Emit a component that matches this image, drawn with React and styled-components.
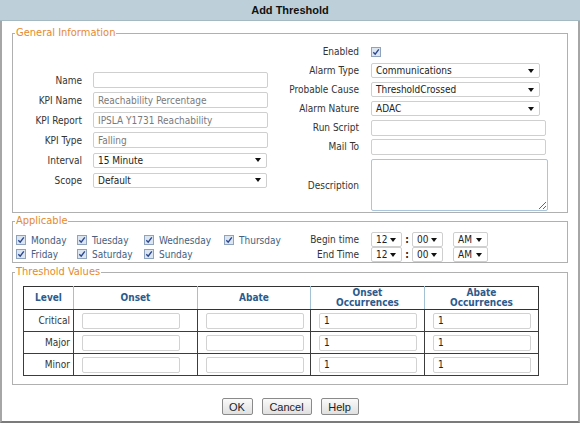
import React from 'react';
import styled, { createGlobalStyle } from 'styled-components';

const GlobalStyle = createGlobalStyle`
  html, body {
    margin: 0;
    padding: 0;
    background: #fff;
  }
  body {
    font-family: "DejaVu Sans Condensed", "Liberation Sans", sans-serif;
    font-size: 10px;
    color: #333;
  }
  * {
    box-sizing: border-box;
  }
`

const days = [
  ['Monday', 'Tuesday', 'Wednesday', 'Thursday'],
  ['Friday', 'Saturday', 'Sunday'],
]

const levels = ['Critical', 'Major', 'Minor']

const Check = () => (
  <CheckBox>
    <svg width="8" height="8" viewBox="0 0 8 8">
      <path d="M1.3 4.2 L3.2 6.2 L6.8 1.4" fill="none" stroke="#2a468f" strokeWidth="1.4" />
    </svg>
  </CheckBox>
)

const Select = ({ value, width }) => (
  <SelectBox $width={width}>
    <span>{value}</span>
    <svg width="6" height="4" viewBox="0 0 6 4">
      <polygon points="0,0 6,0 3,4" fill="#111" />
    </svg>
  </SelectBox>
)

const TimePicker = () => (
  <TimeControls>
    <Select value="12" width={31} />
    <Colon>:</Colon>
    <Select value="00" width={31} />
    <Ampm>
      <Select value="AM" width={35} />
    </Ampm>
  </TimeControls>
)

const App = () => {
  return (
    <Dialog>
      <GlobalStyle />
      <TitleBar>Add Threshold</TitleBar>
      <Body>
        <Group>
          <Legend>General Information</Legend>
          <GeneralGrid>
            <LeftCol>
              <FieldRow $label={69} $gap={11} $h={20}>
                <Label>Name</Label>
                <Input defaultValue="" />
              </FieldRow>
              <FieldRow $label={69} $gap={11} $h={20}>
                <Label>KPI Name</Label>
                <Input readOnly $muted defaultValue="Reachability Percentage" />
              </FieldRow>
              <FieldRow $label={69} $gap={11} $h={20}>
                <Label>KPI Report</Label>
                <Input readOnly $muted defaultValue="IPSLA Y1731 Reachability" />
              </FieldRow>
              <FieldRow $label={69} $gap={11} $h={20}>
                <Label>KPI Type</Label>
                <Input readOnly $muted defaultValue="Falling" />
              </FieldRow>
              <FieldRow $label={69} $gap={11} $h={20}>
                <Label>Interval</Label>
                <Select value="15 Minute" width={174} />
              </FieldRow>
              <FieldRow $label={69} $gap={11} $h={20}>
                <Label>Scope</Label>
                <Select value="Default" width={174} />
              </FieldRow>
            </LeftCol>
            <RightCol>
              <FieldRow $label={90} $gap={12} $h={19}>
                <Label>Enabled</Label>
                <div><Check /></div>
              </FieldRow>
              <FieldRow $label={90} $gap={12} $h={19}>
                <Label>Alarm Type</Label>
                <Select value="Communications" width={169} />
              </FieldRow>
              <FieldRow $label={90} $gap={12} $h={19}>
                <Label>Probable Cause</Label>
                <Select value="ThresholdCrossed" width={169} />
              </FieldRow>
              <FieldRow $label={90} $gap={12} $h={19}>
                <Label>Alarm Nature</Label>
                <Select value="ADAC" width={169} />
              </FieldRow>
              <FieldRow $label={90} $gap={12} $h={19}>
                <Label>Run Script</Label>
                <Input defaultValue="" />
              </FieldRow>
              <FieldRow $label={90} $gap={12} $h={19}>
                <Label>Mail To</Label>
                <Input defaultValue="" />
              </FieldRow>
              <FieldRow $label={90} $gap={12} $h={52} $top={3}>
                <Label>Description</Label>
                <TextArea defaultValue="" />
              </FieldRow>
            </RightCol>
          </GeneralGrid>
        </Group>

        <Group $top={2}>
          <Legend>Applicable</Legend>
          <ApplicableGrid>
            <DayGrid>
              {days.map((row) =>
                row.map((d) => (
                  <DayItem key={d}>
                    <Check />
                    <span>{d}</span>
                  </DayItem>
                ))
              )}
            </DayGrid>
            <div>
              <FieldRow $label={90} $gap={12} $h={15}>
                <Label>Begin time</Label>
                <TimePicker />
              </FieldRow>
              <FieldRow $label={90} $gap={12} $h={15}>
                <Label>End Time</Label>
                <TimePicker />
              </FieldRow>
            </div>
          </ApplicableGrid>
        </Group>

        <Group $top={3}>
          <Legend>Threshold Values</Legend>
          <Table>
            <colgroup>
              <col style={{ width: 50 }} />
              <col style={{ width: 124 }} />
              <col style={{ width: 113 }} />
              <col style={{ width: 114 }} />
              <col style={{ width: 114 }} />
            </colgroup>
            <thead>
              <tr>
                <Th>Level</Th>
                <Th>Onset</Th>
                <Th>Abate</Th>
                <Th>Onset<br />Occurrences</Th>
                <Th>Abate<br />Occurrences</Th>
              </tr>
            </thead>
            <tbody>
              {levels.map((l) => (
                <tr key={l}>
                  <LevelCell>{l}</LevelCell>
                  <Td><CellInput defaultValue="" /></Td>
                  <Td><CellInput defaultValue="" /></Td>
                  <Td><CellInput defaultValue="1" /></Td>
                  <Td><CellInput defaultValue="1" /></Td>
                </tr>
              ))}
            </tbody>
          </Table>
        </Group>

        <ButtonRow>
          <Button $w={31}>OK</Button>
          <Button $w={50}>Cancel</Button>
          <Button $w={38}>Help</Button>
        </ButtonRow>
      </Body>
    </Dialog>
  )
}

const Dialog = styled.div`
  width: 580px;
  height: 426px;
  background: #fff;
  display: flex;
  flex-direction: column;
`

const TitleBar = styled.div`
  height: 21px;
  background: #bdd0d9;
  border-bottom: 1px solid #a5b9c3;
  display: flex;
  align-items: center;
  justify-content: center;
  font: bold 11px "Liberation Sans", sans-serif;
  color: #111;
`

const Body = styled.div`
  height: 402px;
  border: 2px solid #a6a6a6;
  border-top: none;
  border-bottom-color: #7b7b7b;
  padding: 6px 10px 0;
  display: flex;
  flex-direction: column;
`

const Group = styled.fieldset`
  margin: ${(p) => p.$top || 0}px 0 0;
  padding: 0;
  border: 1px solid #b0b0b0;
  min-width: 0;
`

const Legend = styled.legend`
  padding: 0 1px;
  margin-left: 2px;
  color: #e58a2e;
  font-size: 11px;
  line-height: 12px;
`

const GeneralGrid = styled.div`
  display: grid;
  grid-template-columns: 256px 1fr;
  padding: 3px 0 1px;
`

const LeftCol = styled.div`
  padding-top: 28px;
  display: flex;
  flex-direction: column;
`

const RightCol = styled.div`
  display: flex;
  flex-direction: column;
`

const FieldRow = styled.div`
  display: grid;
  grid-template-columns: ${(p) => p.$label}px auto;
  column-gap: ${(p) => p.$gap}px;
  align-items: center;
  height: ${(p) => p.$h}px;
  margin-top: ${(p) => p.$top || 0}px;
`

const Label = styled.div`
  text-align: right;
  white-space: nowrap;
  color: #333;
`

const Input = styled.input`
  width: 175px;
  height: 16px;
  border: 1px solid #cfcfcf;
  border-radius: 2px;
  padding: 0 4px;
  font: inherit;
  color: ${(p) => (p.$muted ? '#7a7a7a' : '#222')};
  background: #fff;
  outline: none;
`

const TextArea = styled.textarea`
  width: 177px;
  height: 52px;
  border: 1px solid #a9c6dc;
  border-radius: 2px;
  font: inherit;
  resize: both;
  outline: none;
  padding: 2px 4px;
`

const SelectBox = styled.div`
  width: ${(p) => p.$width}px;
  height: 15px;
  border: 1px solid #cfcfcf;
  border-radius: 2px;
  background: #fff;
  display: flex;
  align-items: center;
  justify-content: space-between;
  padding: 0 5px 0 4px;
  color: #222;
  white-space: nowrap;
`

const CheckBox = styled.span`
  width: 10px;
  height: 10px;
  border: 1px solid #8fa3bc;
  background: #dce6f1;
  display: inline-flex;
  align-items: center;
  justify-content: center;
  vertical-align: middle;
`

const ApplicableGrid = styled.div`
  display: grid;
  grid-template-columns: 256px 1fr;
  padding: 5px 0 0;
`

const DayGrid = styled.div`
  display: grid;
  grid-template-columns: 61px 67px 80px auto;
  grid-auto-rows: 14px;
  padding: 1px 0 0 3px;
`

const DayItem = styled.div`
  display: flex;
  align-items: center;
  gap: 5px;
  color: #46607e;
  white-space: nowrap;
`

const TimeControls = styled.div`
  display: flex;
  align-items: center;
`

const Colon = styled.span`
  width: 10px;
  text-align: center;
  font-weight: bold;
  color: #222;
`

const Ampm = styled.div`
  margin-left: 10px;
`

const Table = styled.table`
  margin: 8px 0 8px 10px;
  width: 515px;
  border-collapse: collapse;
  table-layout: fixed;
`

const Th = styled.th`
  height: 23px;
  padding: 0;
  border: 1px solid #333;
  border-left-color: #a4c0d4;
  border-right-color: #a4c0d4;
  color: #2b5b8c;
  font-weight: bold;
  font-size: 10px;
  line-height: 10px;
  text-align: center;
  &:first-child {
    border-left-color: #333;
  }
  &:last-child {
    border-right-color: #333;
  }
`

const Td = styled.td`
  height: 22px;
  padding: 0 0 0 8px;
  border: 1px solid #3c3c3c;
`

const LevelCell = styled.td`
  height: 22px;
  padding: 0 3px 0 0;
  border: 1px solid #3c3c3c;
  text-align: right;
  color: #333;
`

const CellInput = styled.input`
  display: block;
  width: 98px;
  height: 16px;
  border: 1px solid #d2d2d2;
  border-radius: 2px;
  padding: 0 4px;
  font: inherit;
  color: #222;
  outline: none;
`

const ButtonRow = styled.div`
  display: flex;
  justify-content: center;
  gap: 9px;
  margin-top: 13px;
`

const Button = styled.button`
  width: ${(p) => p.$w}px;
  height: 17px;
  padding: 0;
  border: 1px solid #8a8a8a;
  border-radius: 2px;
  background: linear-gradient(#fafafa, #e0e0e0);
  font: 11px "Liberation Sans", sans-serif;
  color: #222;
`

export default App;
